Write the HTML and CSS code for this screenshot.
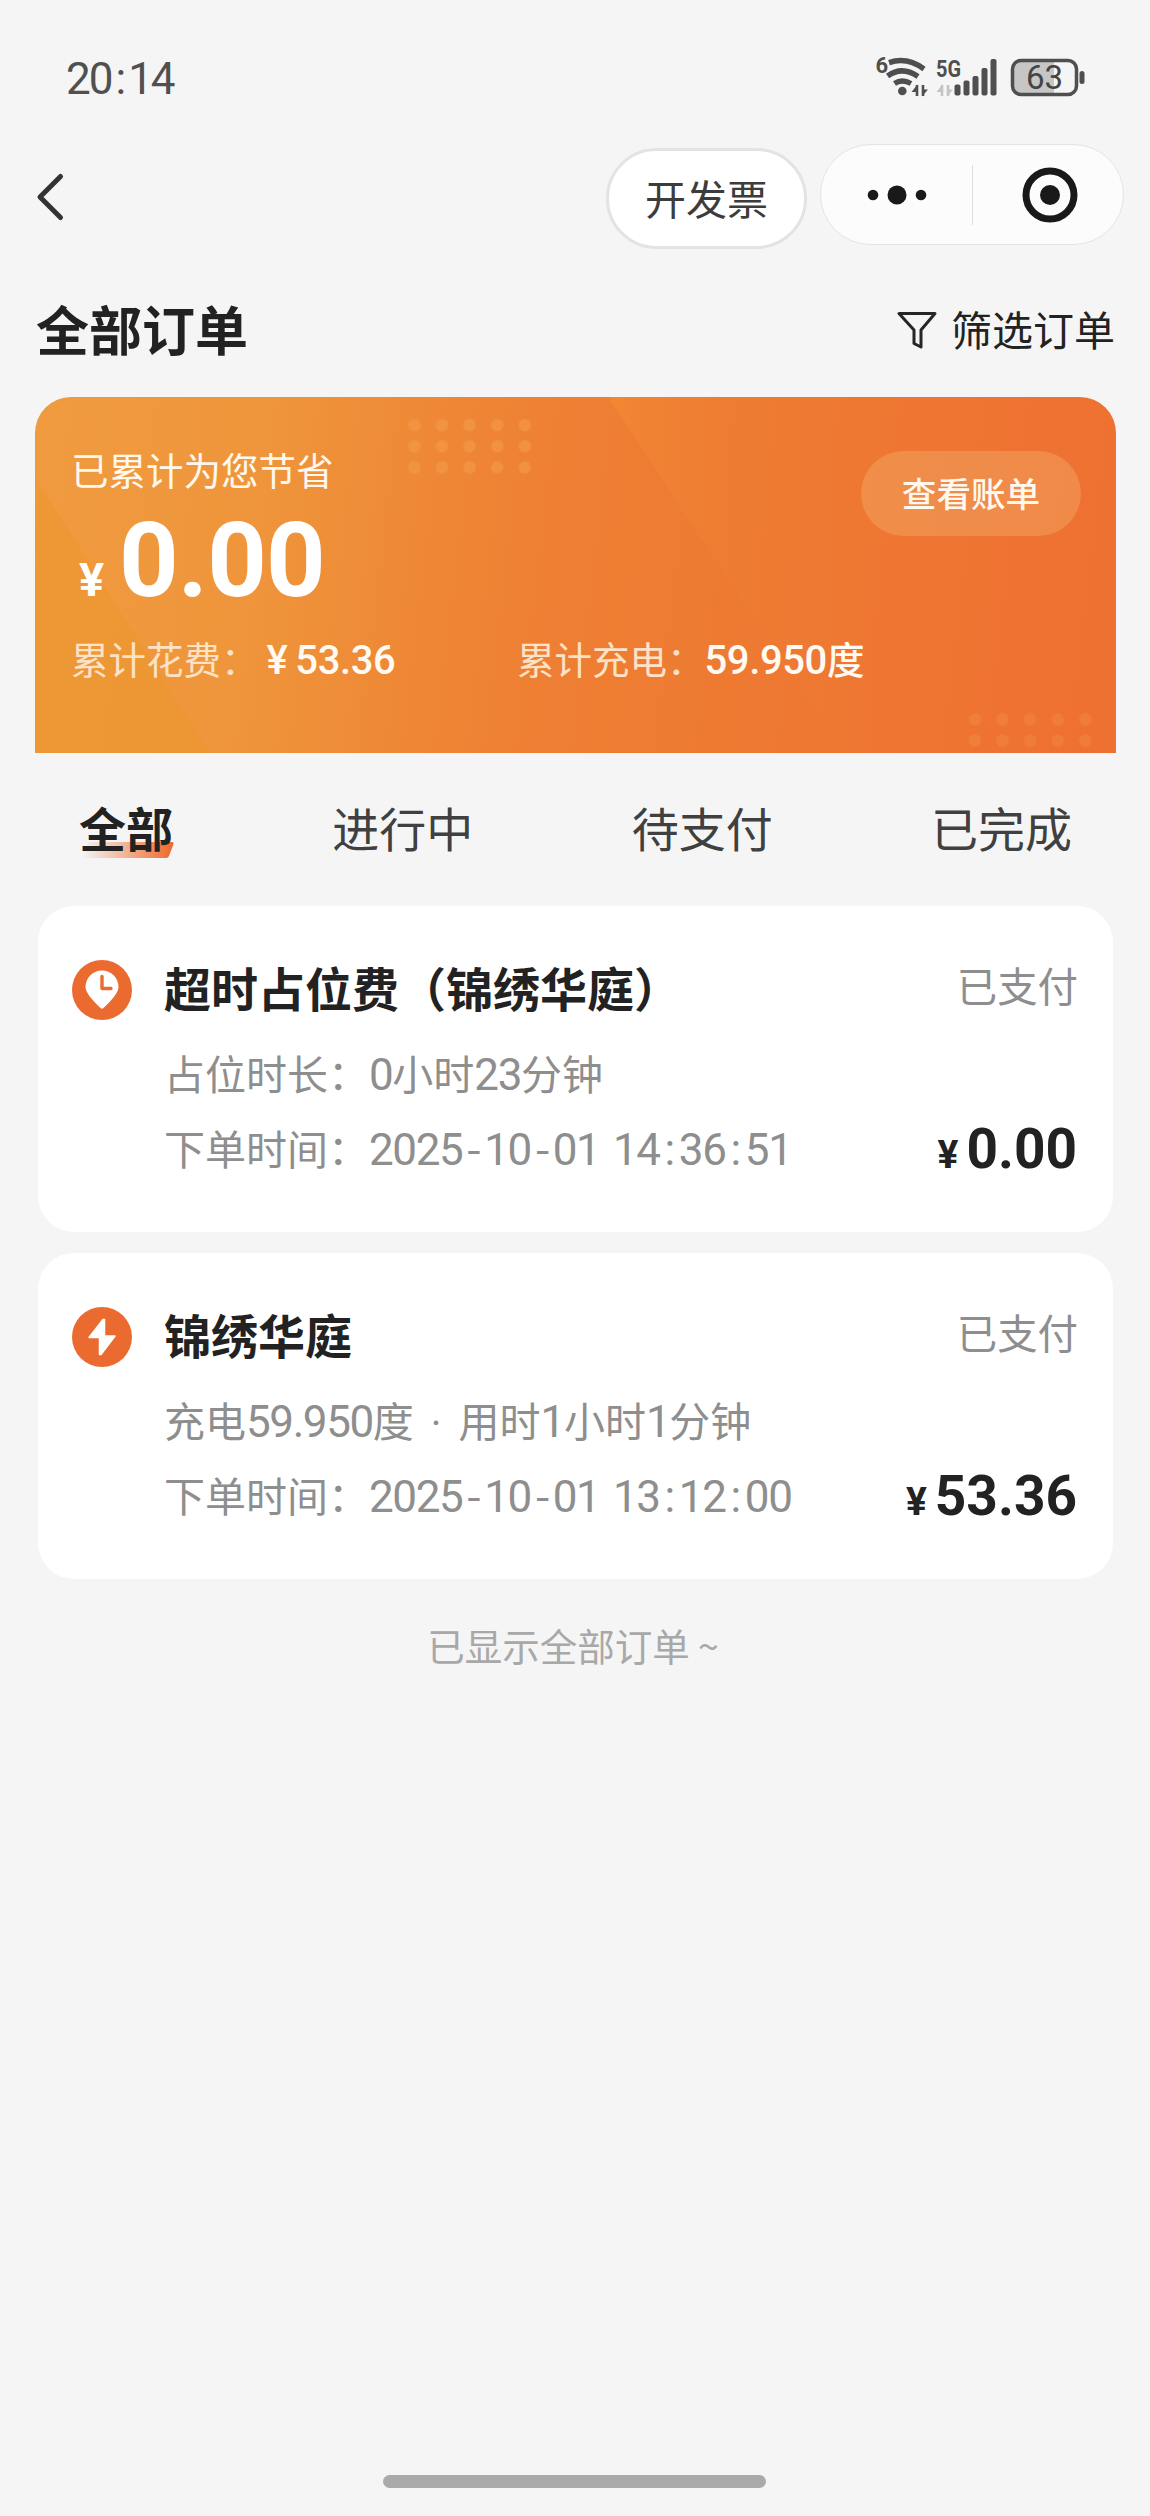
FILE: index.html
```html
<!DOCTYPE html>
<html lang="zh-CN">
<head>
<meta charset="utf-8">
<title>全部订单</title>
<link rel="stylesheet" href="styles.css">
</head>
<body>
<div class="screen">
  <header class="status">
    <span class="clock num">20<span class="sep">:</span>14</span>
    <svg class="status-icons" viewBox="0 0 240 70" width="240" height="70">
      <text x="15.5" y="20" class="tiny six" transform="translate(0 13)">6</text>
      <g fill="none" stroke="#4f4f4f" stroke-width="5.4">
        <path d="M29 22.6Q47 16.4 64 29"/>
        <path d="M27.6 36Q42 25.500 58 36.500"/>
        <path d="M34.500 43.500Q42 38.500 51 43.500"/>
      </g>
      <circle cx="42.300" cy="51" r="4.300" fill="#4f4f4f"/>
      <path d="M57 45v11M63 45v11" stroke="#4f4f4f" stroke-width="2.600"/>
      <path d="M51.500 52l6-7.500v7.500zM68 49.500l-6 7v-7z" fill="#4f4f4f"/>
      <text x="76" y="36.500" class="tiny" textLength="25" lengthAdjust="spacingAndGlyphs">5G</text>
      <path d="M82 45v11M88 45v11" stroke="#c4c4c4" stroke-width="2.600"/>
      <path d="M76.500 52l6-7.500v7.500zM93 49.500l-6 7v-7z" fill="#c4c4c4"/>
      <g fill="#4f4f4f">
        <rect x="94.500" y="44.500" width="6" height="11" rx="2"/>
        <rect x="103.500" y="40.500" width="6" height="15" rx="2"/>
        <rect x="112.500" y="36" width="6" height="19.500" rx="2"/>
        <rect x="121.500" y="28" width="6" height="27.500" rx="2"/>
        <rect x="130.500" y="19" width="6" height="36.500" rx="2"/>
      </g>
      <path d="M161 20h33v35h-33q-9 0-9-9V29q0-9 9-9z" fill="#c6c6c6"/>
      <rect x="152.500" y="20.500" width="64" height="34" rx="8.500" fill="none" stroke="#4f4f4f" stroke-width="3.500"/>
      <rect x="219.500" y="31" width="5" height="13" rx="2.500" fill="#4f4f4f"/>
      <text x="184.500" y="49" class="battery" text-anchor="middle">63</text>
    </svg>
  </header>

  <nav class="navbar">
    <svg class="back" viewBox="0 0 32 52" width="32" height="52"><path d="M26.500 5.500L6 26l20.500 20.500" fill="none" stroke="#333" stroke-width="5" stroke-linecap="round" stroke-linejoin="round"/></svg>
    <button class="invoice">开发票</button>
    <div class="capsule">
      <svg class="more" viewBox="0 0 60 24" width="60" height="24" fill="#191919"><circle cx="6" cy="12" r="5.300"/><circle cx="30" cy="12" r="9.500"/><circle cx="54" cy="12" r="5.300"/></svg>
      <i class="divider"></i>
      <svg class="close" viewBox="0 0 56 56" width="56" height="56"><circle cx="28" cy="28" r="24" fill="none" stroke="#191919" stroke-width="7"/><circle cx="28" cy="28" r="10" fill="#191919"/></svg>
    </div>
  </nav>

  <div class="heading">
    <h1>全部订单</h1>
    <div class="filter">
      <svg viewBox="0 0 40 38" width="40" height="38"><path d="M2 2.500h36L24 19v17l-7-3.500V19z" fill="none" stroke="#262626" stroke-width="3" stroke-linejoin="round"/></svg>
      <span>筛选订单</span>
    </div>
  </div>

  <section class="summary">
    <svg class="summary-bg" viewBox="0 0 1081 356" width="1081" height="356">
      <defs>
        <linearGradient id="base" x1="0" x2="1" y1="0" y2=".04">
          <stop offset="0" stop-color="#f09b40"/><stop offset=".22" stop-color="#ef953b"/><stop offset=".36" stop-color="#ee8936"/><stop offset=".5" stop-color="#ee7f33"/><stop offset=".75" stop-color="#ee7832"/><stop offset="1" stop-color="#ee7132"/>
        </linearGradient>
        <linearGradient id="beam" x1="573" x2="900" y1="0" y2="0" gradientUnits="userSpaceOnUse"><stop offset="0" stop-color="#f38b34" stop-opacity=".7"/><stop offset=".35" stop-color="#ee7e32" stop-opacity=".5"/><stop offset="1" stop-color="#ee7832" stop-opacity="0"/></linearGradient>
        <pattern id="dots" width="27.600" height="21.200" patternUnits="userSpaceOnUse"><circle cx="6.400" cy="6.400" r="6.200" fill="#f3a04e" fill-opacity=".5"/></pattern>
      </defs>
      <rect width="1081" height="356" fill="url(#base)"/>
      <path d="M0 80L175 356H0z" fill="#ec952b" fill-opacity=".5"/>
      <path d="M573 0L808 356H1081V0z" fill="url(#beam)"/>
      <g transform="translate(373 21.600)"><rect width="124" height="56" fill="url(#dots)"/></g>
      <g transform="translate(933.500 316)" opacity=".5"><rect width="124" height="35" fill="url(#dots)"/></g>
    </svg>
    <div class="summary-body">
      <div class="saved">
        <div>
          <p class="saved-label">已累计为您节省</p>
          <p class="saved-amount"><small>¥</small><b>0.00</b></p>
        </div>
        <button class="bill">查看账单</button>
      </div>
      <div class="totals">
        <p><span>累计花费：</span><b class="yen">¥</b><b>53.36</b></p>
        <p><span>累计充电：</span><b>59.950<em>度</em></b></p>
      </div>
    </div>
  </section>

  <div class="tabs">
    <span class="tab active"><svg viewBox="0 0 92 16" width="92" height="16"><defs><linearGradient id="mark"><stop offset="0" stop-color="#ee6c2e" stop-opacity="0"/><stop offset="1" stop-color="#ee6829"/></linearGradient></defs><path d="M6 0h84q2 0 1.500 2L87 14q-.5 2-3 2H0z" fill="url(#mark)"/></svg><b>全部</b></span>
    <span class="tab">进行中</span>
    <span class="tab">待支付</span>
    <span class="tab">已完成</span>
  </div>

  <main class="orders">
    <article class="order">
      <svg class="badge" viewBox="0 0 60 60" width="60" height="60"><circle cx="30" cy="30" r="30" fill="#eb6a30"/><path d="M28.500 48Q13.500 34 13.500 27a16.500 16.500 0 0 1 33 0Q46.500 34 31.500 48Q30 49.500 28.500 48z" fill="#fff"/><path d="M30 16.500V28.500H39" fill="none" stroke="#eb6a30" stroke-width="3.400" stroke-linecap="round" stroke-linejoin="round"/></svg>
      <div class="info">
        <div class="row top"><h2>超时占位费（锦绣华庭）</h2><span class="state">已支付</span></div>
        <div class="row"><span>占位时长：<i class="num">0</i>小时<i class="num">23</i>分钟</span></div>
        <div class="row last"><span>下单时间：<i class="num">2025<span class="sep dash">-</span>10<span class="sep dash">-</span>01 14<span class="sep">:</span>36<span class="sep">:</span>51</i></span><span class="price"><small>¥</small><b>0.00</b></span></div>
      </div>
    </article>
    <article class="order">
      <svg class="badge" viewBox="0 0 60 60" width="60" height="60"><circle cx="30" cy="30" r="30" fill="#eb6a30"/><path d="M31 12.500L17 30.500H27.500V47.500H29L43 29H32.500V12.500z" fill="#fff" stroke="#fff" stroke-width="1.500" stroke-linejoin="round"/></svg>
      <div class="info">
        <div class="row top"><h2>锦绣华庭</h2><span class="state">已支付</span></div>
        <div class="row"><span>充电<i class="num">59.950</i>度<span class="mid">·</span>用时<i class="num">1</i>小时<i class="num">1</i>分钟</span></div>
        <div class="row last"><span>下单时间：<i class="num">2025<span class="sep dash">-</span>10<span class="sep dash">-</span>01 13<span class="sep">:</span>12<span class="sep">:</span>00</i></span><span class="price"><small>¥</small><b>53.36</b></span></div>
      </div>
    </article>
  </main>
  <p class="end">已显示全部订单 ~</p>
  <div class="home"></div>
</div>
</body>
</html>
```
FILE: styles.css
```css
* { box-sizing: border-box; margin: 0; padding: 0; }
body { background: #f5f5f5; }
i, em { font-style: normal; }
svg { display: block; flex: none; }
button { border: 0; font: inherit; }
.screen {
  width: 1150px; height: 2516px; overflow: hidden;
  display: flex; flex-direction: column;
  font-family: "Noto Sans CJK SC", sans-serif;
  font-size: 41px; line-height: 1; color: #222;
}
.num { font-family: Roboto, sans-serif; font-size: 44px; letter-spacing: -1.4px; word-spacing: 4px; line-height: 1; }
.sep { padding: 0 5px; }
.dash { font-family: "Noto Sans CJK SC", sans-serif; padding: 0 4px; }

.status { height: 116px; padding: 40px 50px 0 66px; display: flex; justify-content: space-between; }
.clock { color: #505050; padding-top: 17px; letter-spacing: -2px; }
.clock .sep { padding: 0 4px; }
.tiny { font: 700 24px Roboto, sans-serif; fill: #4f4f4f; }
.six { font-size: 22px; }
.battery { font: 400 33px Roboto, sans-serif; fill: #444; }

.navbar { height: 160px; padding: 28px 26px 0 34px; display: flex; align-items: flex-start; }
.back { margin-top: 27px; }
.invoice { margin: 4px 13px 0 auto; width: 201px; height: 101px; border: 3px solid #e3e3e3; border-radius: 51px; background: #fff; color: #3c3c3c; padding-bottom: 3px; }
.capsule { width: 304px; height: 101px; border: 1px solid #e4e4e4; border-radius: 51px; background: #fcfcfc; display: flex; align-items: center; }
.more { margin-left: 46px; }
.divider { width: 1px; height: 60px; background: #dedede; margin: 0 49px 0 45px; }

.heading { height: 121px; padding: 0 35px 17px 36px; display: flex; justify-content: space-between; align-items: center; }
h1 { font-size: 53px; font-weight: 700; line-height: 1; }
.filter { display: flex; align-items: center; gap: 14px; }
.filter svg { margin-top: 4px; }

.summary { margin-left: 35px; width: 1081px; height: 356px; border-radius: 36px 36px 0 0; overflow: hidden; display: grid; }
.summary-bg, .summary-body { grid-area: 1 / 1; }
.summary-body { z-index: 1; color: #fff8ee; padding: 53px 35px 0 36px; }
.saved { display: flex; justify-content: space-between; height: 170px; }
.saved-label { font-size: 37.500px; }
.saved-amount { font-family: Roboto, sans-serif; color: #fff; display: flex; align-items: baseline; padding: 21px 0 0 8px; line-height: 104px; }
.saved-amount small { font-size: 47px; font-weight: 700; width: 40px; }
.saved-amount b { font-size: 104px; letter-spacing: -.8px; }
.bill { width: 220px; height: 85px; margin-top: 1px; border-radius: 43px; background: rgba(248,210,140,.26); color: #fff8ee; font-size: 34.600px; font-weight: 500; padding-bottom: 3px; }
.totals { display: grid; grid-template-columns: 446px 1fr; padding-top: 16px; font-size: 37.500px; line-height: 44px; }
.totals span { color: #fde2c6; }
.totals b { font-family: Roboto, "Noto Sans CJK SC", sans-serif; font-weight: 500; font-size: 40px; color: #fffaf2; letter-spacing: -.4px; }
.totals .yen { margin: 0 8px 0 8px; }
.totals em { font-size: 37.500px; }

.tabs { height: 153px; padding: 50px 78px 0 79px; display: flex; justify-content: space-between; font-size: 47px; color: #404040; line-height: 48px; }
.active { display: grid; height: 55px; color: #222; }
.active svg, .active b { grid-area: 1 / 1; }
.active svg { align-self: end; margin-left: 3px; }
.active b { z-index: 1; }

.orders { display: flex; flex-direction: column; gap: 21px; padding: 0 37px 0 38px; }
.order { height: 326px; border-radius: 36px; background: #fff; padding: 54px 36px 0 34px; display: flex; gap: 32px; color: #8e8e8e; }
.info { flex: 1; margin-top: -2px; }
.row { display: flex; justify-content: space-between; height: 75px; line-height: 60px; white-space: nowrap; }
.top { height: 84px; }
h2 { font-size: 47px; font-weight: 700; color: #222; line-height: 58px; }
.state { font-size: 40.400px; line-height: 53px; margin-right: -1px; }
.row .num { line-height: 1; }
.mid { font-family: Roboto, sans-serif; padding: 0 17px; }
.price { font-family: Roboto, sans-serif; color: #222; padding-top: 2px; }
.price small { font-size: 39px; font-weight: 700; margin-right: 8px; }
.price b { font-size: 55px; }
.end { text-align: center; font-size: 37.500px; color: #a8a8a8; padding: 47px 4px 0 0; }
.home { width: 383px; height: 13px; border-radius: 7px; background: #aaa; margin: auto auto 28px 383px; }
```
